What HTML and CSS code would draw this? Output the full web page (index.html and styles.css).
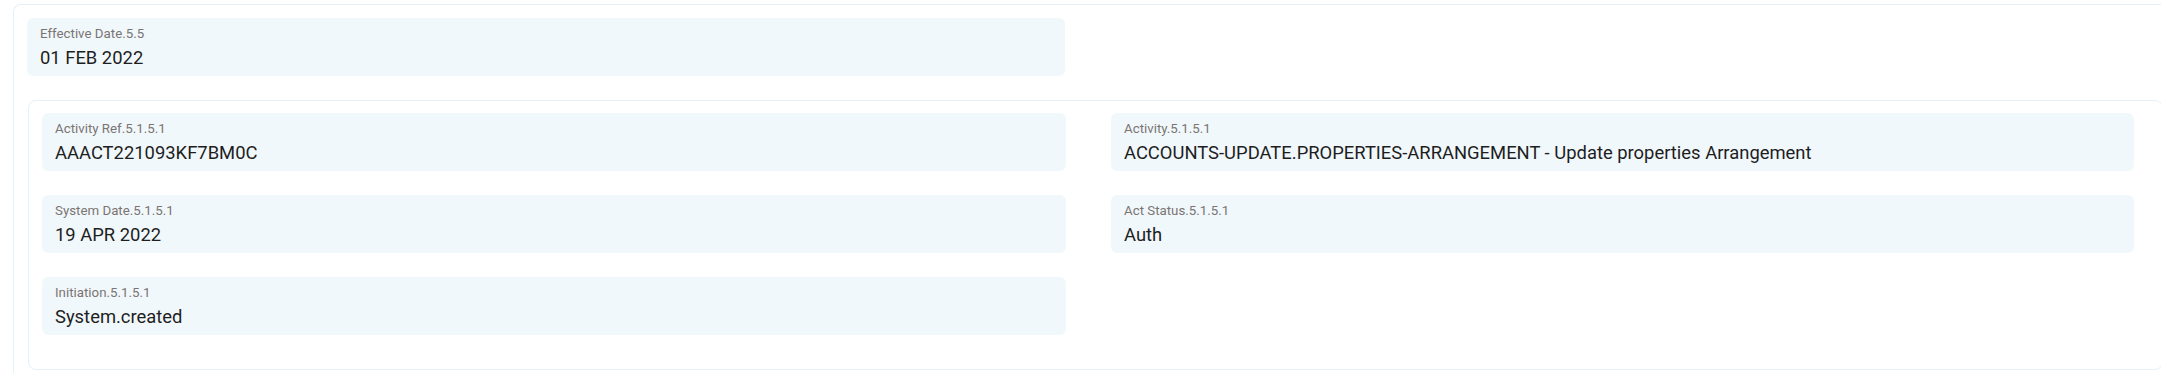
FILE: index.html
```html
<!DOCTYPE html>
<html lang="en">

<head>
  <meta charset="UTF-8">
  <meta name="viewport" content="width=device-width, initial-scale=1.0">
  <title>Activity Details</title>
  <link rel="stylesheet" href="styles.css">
</head>

<body>
  <div class="panel">
    <div class="field-grid top-grid">
      <div class="field">
        <div class="field-label">Effective Date.5.5</div>
        <div class="field-value">01 FEB 2022</div>
      </div>
    </div>

    <!-- activity group -->
    <div class="group">
      <div class="field-grid">
        <div class="field">
          <div class="field-label">Activity Ref.5.1.5.1</div>
          <div class="field-value">AAACT221093KF7BM0C</div>
        </div>
        <div class="field">
          <div class="field-label">Activity.5.1.5.1</div>
          <div class="field-value">ACCOUNTS-UPDATE.PROPERTIES-ARRANGEMENT - Update properties Arrangement</div>
        </div>
        <div class="field">
          <div class="field-label">System Date.5.1.5.1</div>
          <div class="field-value">19 APR 2022</div>
        </div>
        <div class="field">
          <div class="field-label">Act Status.5.1.5.1</div>
          <div class="field-value">Auth</div>
        </div>
        <div class="field">
          <div class="field-label">Initiation.5.1.5.1</div>
          <div class="field-value">System.created</div>
        </div>
      </div>
    </div>
  </div>
</body>

</html>
```

FILE: styles.css
```css
* {
  margin: 0;
  padding: 0;
  box-sizing: border-box;
}

body {
  font-family: Roboto, 'Liberation Sans', Arial, sans-serif;
  background: white;
  overflow: hidden;
}

.panel {
  width: 2200px;
  margin: 4px 0 0 13px;
  padding: 13px 0 0 13px;
  border: 1px solid #e4f0fa;
  border-right: none;
  border-radius: 8px 0 0 0;
  min-height: 400px;
}

.group {
  margin: 24px 0 0 1px;
  padding: 12px 13px 34px 13px;
  width: 2135px;
  border: 1px solid #e4f0fa;
  border-radius: 8px;
}

.field-grid {
  display: grid;
  grid-template-columns: 1024px 1023px;
  column-gap: 45px;
  row-gap: 24px;
}

.top-grid {
  grid-template-columns: 1038px;
}

.field {
  background: #f1f8fc;
  border-radius: 6px;
  height: 58px;
  padding: 8px 13px 0;
}

.field-label {
  font-size: 13.3px;
  line-height: 16px;
  color: #7a7572;
}

.field-value {
  font-size: 18.4px;
  line-height: 24px;
  color: #1e1e1e;
  margin-top: 4px;
}
```
